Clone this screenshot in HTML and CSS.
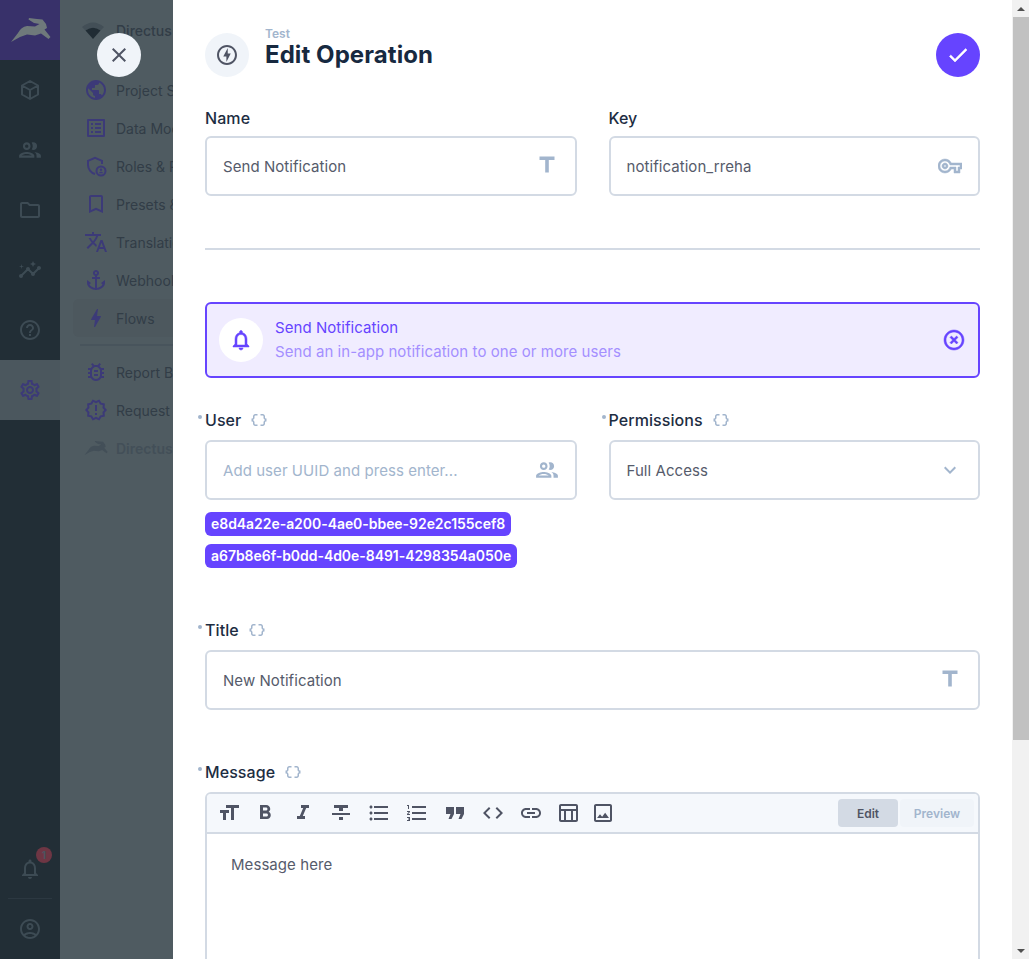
FILE: index.html
```html
<!DOCTYPE html>
<html lang="en">
<head>
    <meta charset="UTF-8">
    <meta name="viewport" content="width=device-width, initial-scale=1.0">
    <title>Edit Operation</title>
    <link rel="stylesheet" href="styles.css">
</head>
<body>
    <svg class="sprite" aria-hidden="true">
        <symbol id="rabbit" viewBox="9 17 41 26"><path d="M10 42L17 33Q20 27 26 26L34 26.500L38.500 24L33 23L27.500 19.500L28 18L36 19L41.500 19.500L45 24L46 28L43.500 29.500L49.500 37L47.500 39L40 33.500L34 35.500L26 34.500L19 37Z"/></symbol>
        <symbol id="people" viewBox="1 1 22 22"><path d="M9 13.750c-2.340 0-7 1.170-7 3.500V19h14v-1.750c0-2.330-4.660-3.500-7-3.500zM4.340 17c.84-.58 2.870-1.250 4.660-1.250s3.820.67 4.660 1.250H4.340zM9 12c1.930 0 3.500-1.570 3.500-3.500S10.930 5 9 5 5.500 6.570 5.500 8.500 7.070 12 9 12zm0-5c.83 0 1.500.67 1.500 1.500S9.830 10 9 10s-1.500-.67-1.500-1.500S8.170 7 9 7zm7.040 6.810c1.160.84 1.960 1.960 1.960 3.440V19h4v-1.750c0-2.020-3.500-3.170-5.960-3.440zM15 12c1.930 0 3.500-1.570 3.500-3.500S16.930 5 15 5c-.54 0-1.040.13-1.500.35.63.89 1 1.980 1 3.150s-.37 2.260-1 3.150c.46.22.96.35 1.500.35z"/></symbol>
        <symbol id="braces" viewBox="0 0 24 24"><path d="M4 7v2c0 .55-.45 1-1 1H2v4h1c.55 0 1 .45 1 1v2c0 1.650 1.350 3 3 3h3v-2H7c-.55 0-1-.45-1-1v-2c0-1.300-.84-2.420-2-2.830v-.34C5.160 11.420 6 10.300 6 9V7c0-.55.45-1 1-1h3V4H7C5.350 4 4 5.350 4 7zm17 3c-.55 0-1-.45-1-1V7c0-1.650-1.350-3-3-3h-3v2h3c.55 0 1 .45 1 1v2c0 1.300.84 2.420 2 2.830v.34c-1.160.41-2 1.520-2 2.830v2c0 .55-.45 1-1 1h-3v2h3c1.650 0 3-1.350 3-3v-2c0-.55.45-1 1-1h1v-4h-1z"/></symbol>
        <symbol id="title-icon" viewBox="0 0 24 24"><path d="M4.500 2.500v3.500h5.700v12.500h3.600V6h5.700V2.500z"/></symbol>
    </svg>

    <div class="app">
        <!-- far left module bar -->
        <aside class="modules">
            <div class="logo"><svg class="logo-mark"><use href="#rabbit"/></svg></div>
            <div class="module"><svg class="icon" viewBox="0 0 24 24"><path class="cube" d="M12 3l8 4.500v9L12 21l-8-4.500v-9zM4 7.500l8 4.500 8-4.500M12 12v9"/></svg></div>
            <div class="module"><svg class="icon"><use href="#people"/></svg></div>
            <div class="module"><svg class="icon" viewBox="0 0 24 24"><path d="M9.170 6l2 2H20v10H4V6h5.170M10 4H4c-1.100 0-1.990.9-1.990 2L2 18c0 1.100.9 2 2 2h16c1.100 0 2-.9 2-2V8c0-1.100-.9-2-2-2h-8l-2-2z"/></svg></div>
            <div class="module"><svg class="icon" viewBox="0 0 24 24"><path d="M21 8c-1.450 0-2.260 1.440-1.930 2.510l-3.550 3.560c-.3-.09-.74-.09-1.040 0l-2.550-2.550C12.270 10.450 11.460 9 10 9c-1.450 0-2.270 1.440-1.930 2.520l-4.560 4.550C2.440 15.740 1 16.550 1 18c0 1.100.9 2 2 2 1.450 0 2.260-1.440 1.930-2.510l4.550-4.560c.3.09.74.09 1.040 0l2.550 2.550C12.730 16.550 13.540 18 15 18c1.450 0 2.270-1.440 1.930-2.520l3.560-3.550c1.070.33 2.510-.48 2.510-1.930 0-1.100-.9-2-2-2z"/><path d="M15 9l.94-2.070L18 6l-2.060-.93L15 3l-.92 2.070L12 6l2.080.93zM3.500 11L4 9l2-.5L4 8l-.5-2L3 8l-2 .5L3 9z"/></svg></div>
            <div class="module"><svg class="icon" viewBox="0 0 24 24"><path d="M11 18h2v-2h-2v2zm1-16C6.480 2 2 6.480 2 12s4.480 10 10 10 10-4.480 10-10S17.520 2 12 2zm0 18c-4.410 0-8-3.590-8-8s3.590-8 8-8 8 3.590 8 8-3.590 8-8 8zm0-14c-2.210 0-4 1.790-4 4h2c0-1.100.9-2 2-2s2 .9 2 2c0 2-3 1.750-3 5h2c0-2.250 3-2.500 3-5 0-2.210-1.790-4-4-4z"/></svg></div>
            <div class="module active"><svg class="icon" viewBox="0 0 24 24"><path d="M19.430 12.980c.04-.32.07-.64.07-.98 0-.34-.03-.66-.07-.98l2.110-1.650c.19-.15.24-.42.12-.64l-2-3.460c-.09-.16-.26-.25-.44-.25-.06 0-.12.01-.17.03l-2.490 1c-.52-.4-1.080-.73-1.690-.98l-.38-2.650C14.460 2.180 14.250 2 14 2h-4c-.25 0-.46.18-.49.42l-.38 2.650c-.61.25-1.170.59-1.690.98l-2.490-1c-.06-.02-.12-.03-.18-.03-.17 0-.34.09-.43.25l-2 3.460c-.13.22-.07.49.12.64l2.110 1.650c-.04.32-.07.65-.07.98 0 .33.03.66.07.98l-2.110 1.650c-.19.15-.24.42-.12.64l2 3.460c.09.16.26.25.44.25.06 0 .12-.01.17-.03l2.490-1c.52.4 1.080.73 1.690.98l.38 2.650c.03.24.24.42.49.42h4c.25 0 .46-.18.49-.42l.38-2.650c.61-.25 1.170-.59 1.690-.98l2.490 1c.06.02.12.03.18.03.17 0 .34-.09.43-.25l2-3.460c.12-.22.07-.49-.12-.64l-2.110-1.650zm-1.980-1.710c.04.31.05.52.05.73 0 .21-.02.43-.05.73l-.14 1.130.89.7 1.080.84-.7 1.210-1.270-.51-1.040-.42-.9.68c-.43.32-.84.56-1.250.73l-1.060.43-.16 1.130-.2 1.350h-1.400l-.19-1.350-.16-1.130-1.060-.43c-.43-.18-.83-.41-1.230-.71l-.91-.7-1.060.43-1.270.51-.7-1.210 1.080-.84.89-.7-.14-1.130c-.03-.31-.05-.54-.05-.74s.02-.43.05-.73l.14-1.130-.89-.7-1.080-.84.7-1.210 1.270.51 1.040.42.9-.68c.43-.32.84-.56 1.250-.73l1.060-.43.16-1.130.2-1.350h1.390l.19 1.350.16 1.130 1.060.43c.43.18.83.41 1.230.71l.91.7 1.060-.43 1.270-.51.7 1.210-1.070.85-.89.7.14 1.130zM12 8c-2.210 0-4 1.790-4 4s1.790 4 4 4 4-1.790 4-4-1.790-4-4-4zm0 6c-1.100 0-2-.9-2-2s.9-2 2-2 2 .9 2 2-.9 2-2 2z"/></svg></div>
            <div class="module bottom-first">
                <svg class="icon" viewBox="0 0 24 24"><path d="M12 22c1.100 0 2-.9 2-2h-4c0 1.100.9 2 2 2zm6-6v-5c0-3.070-1.630-5.640-4.500-6.320V4c0-.83-.67-1.500-1.500-1.500s-1.500.67-1.500 1.500v.68C7.640 5.360 6 7.920 6 11v5l-2 2v1h16v-1l-2-2zm-2 1H8v-6c0-2.480 1.510-4.500 4-4.500s4 2.020 4 4.500v6z"/></svg>
                <span class="badge">1</span>
            </div>
            <div class="module-line"></div>
            <div class="module"><svg class="icon" viewBox="0 0 24 24"><path d="M12 2C6.480 2 2 6.480 2 12s4.480 10 10 10 10-4.480 10-10S17.520 2 12 2zM7.350 18.500C8.660 17.560 10.260 17 12 17s3.340.56 4.650 1.500c-1.310.94-2.910 1.500-4.650 1.500s-3.340-.56-4.650-1.500zm10.790-1.380C16.450 15.800 14.320 15 12 15s-4.450.8-6.140 2.120C4.700 15.730 4 13.950 4 12c0-4.420 3.580-8 8-8s8 3.580 8 8c0 1.950-.7 3.730-1.860 5.120zM12 6c-1.930 0-3.500 1.570-3.500 3.500S10.070 13 12 13s3.500-1.570 3.500-3.500S13.930 6 12 6zm0 5c-.83 0-1.500-.67-1.500-1.500S11.170 8 12 8s1.500.67 1.500 1.500S12.830 11 12 11z"/></svg></div>
        </aside>

        <!-- settings nav, dimmed behind the drawer -->
        <nav class="nav">
            <div class="nav-head">
                <svg class="signal" viewBox="0 0 24 18"><path class="signal-top" d="M1 6Q12 -3 23 6L19.500 9.500Q12 4 4.500 9.500Z"/><path d="M4.500 9.500Q12 4 19.500 9.500L12 18Z"/></svg>
                <span>Directus</span>
            </div>
            <ul class="nav-list">
                <li class="nav-item"><svg class="icon" viewBox="0 0 24 24"><path d="M12 2C6.480 2 2 6.480 2 12s4.480 10 10 10 10-4.480 10-10S17.520 2 12 2zm-1 17.930c-3.950-.49-7-3.850-7-7.930 0-.62.08-1.210.21-1.790L9 15v1c0 1.100.9 2 2 2v1.930zm6.900-2.540c-.26-.81-1-1.390-1.900-1.390h-1v-3c0-.55-.45-1-1-1H8v-2h2c.55 0 1-.45 1-1V7h2c1.100 0 2-.9 2-2v-.41c2.930 1.190 5 4.060 5 7.410 0 2.080-.8 3.970-2.100 5.390z"/></svg><span>Project Settings</span></li>
                <li class="nav-item"><svg class="icon" viewBox="0 0 24 24"><path d="M19 5v14H5V5h14m1.100-2H3.900c-.5 0-.9.4-.9.9v16.200c0 .4.4.9.9.9h16.200c.4 0 .9-.5.9-.9V3.900c0-.5-.5-.9-.9-.9zM11 7h6v2h-6V7zm0 4h6v2h-6v-2zm0 4h6v2h-6zM7 7h2v2H7zm0 4h2v2H7zm0 4h2v2H7z"/></svg><span>Data Model</span></li>
                <li class="nav-item"><svg class="icon" viewBox="0 0 24 24"><path class="shield" d="M11 20C7 18.800 4 15 4 11V6.800L11 3.800L18 6.800V10"/><circle class="shield" cx="17" cy="17" r="4.500"/><circle cx="17" cy="15.700" r="1.200"/><path d="M14.800 19.300c.4-1 1.300-1.500 2.200-1.500s1.800.5 2.200 1.500z"/></svg><span>Roles &amp; Permissions</span></li>
                <li class="nav-item"><svg class="icon" viewBox="0 0 24 24"><path d="M17 3H7c-1.100 0-1.990.9-1.990 2L5 21l7-3 7 3V5c0-1.100-.9-2-2-2zm0 15l-5-2.180L7 18V5h10v13z"/></svg><span>Presets &amp; Bookmarks</span></li>
                <li class="nav-item"><svg class="icon" viewBox="0 0 24 24"><path d="M12.870 15.070l-2.540-2.510.03-.03c1.740-1.940 2.980-4.170 3.710-6.530H17V4h-7V2H8v2H1v1.990h11.170C11.500 7.920 10.440 9.750 9 11.350 8.070 10.320 7.300 9.190 6.690 8h-2c.73 1.630 1.730 3.170 2.980 4.560l-5.090 5.020L4 19l5-5 3.110 3.110.76-2.040zM18.500 10h-2L12 22h2l1.120-3h4.750L21 22h2l-4.500-12zm-2.620 7l1.620-4.330L19.120 17h-3.240z"/></svg><span>Translation Strings</span></li>
                <li class="nav-item"><svg class="icon" viewBox="0 0 24 24"><path d="M17 15l1.550 1.550c-.96 1.690-3.330 3.040-5.550 3.370V11h3V9h-3V7.820C14.160 7.400 15 6.300 15 5c0-1.650-1.350-3-3-3S9 3.350 9 5c0 1.300.84 2.400 2 2.820V9H8v2h3v8.920c-2.220-.33-4.590-1.680-5.550-3.370L7 15l-4-3v3c0 3.880 4.920 7 9 7s9-3.120 9-7v-3l-4 3zM12 4c.55 0 1 .45 1 1s-.45 1-1 1-1-.45-1-1 .45-1 1-1z"/></svg><span>Webhooks</span></li>
                <li class="nav-item current"><svg class="icon" viewBox="0 0 24 24"><path d="M11 21h-1l1-7H7.500c-.88 0-.33-.75-.31-.78C8.480 10.940 10.420 7.540 13.010 3h1l-1 7h3.510c.4 0 .62.19.4.66C12.970 17.550 11 21 11 21z"/></svg><span>Flows</span></li>
                <li class="nav-line"></li>
                <li class="nav-item"><svg class="icon" viewBox="0 0 24 24"><path d="M20 8h-2.810c-.45-.78-1.070-1.450-1.820-1.960L17 4.410 15.590 3l-2.170 2.170C12.960 5.060 12.490 5 12 5s-.96.06-1.410.17L8.410 3 7 4.410l1.620 1.630C7.880 6.550 7.260 7.220 6.810 8H4v2h2.090c-.05.33-.09.66-.09 1v1H4v2h2v1c0 .34.04.67.09 1H4v2h2.810c1.040 1.790 2.970 3 5.190 3s4.150-1.210 5.190-3H20v-2h-2.090c.05-.33.09-.66.09-1v-1h2v-2h-2v-1c0-.34-.04-.67-.09-1H20V8zm-4 4v3c0 .22-.03.47-.07.7l-.1.65-.37.65c-.72 1.240-2.040 2-3.460 2s-2.740-.77-3.460-2l-.37-.64-.1-.65C8.030 15.480 8 15.230 8 15v-4c0-.23.03-.48.07-.7l.1-.65.37-.65c.3-.52.72-.97 1.210-1.310l.57-.39.74-.18c.31-.08.63-.12.94-.12.32 0 .63.04.95.12l.68.16.61.42c.5.34.91.78 1.210 1.310l.38.65.1.65c.04.22.07.47.07.69v1zm-6 2h4v2h-4zm0-4h4v2h-4z"/></svg><span>Report Bug</span></li>
                <li class="nav-item"><svg class="icon" viewBox="0 0 24 24"><path d="M23 12l-2.440-2.780.34-3.680-3.610-.82-1.890-3.180L12 3 8.600 1.540 6.710 4.720l-3.610.81.34 3.680L1 12l2.440 2.780-.34 3.690 3.610.82 1.890 3.180L12 21l3.400 1.460 1.890-3.180 3.610-.82-.34-3.680L23 12zm-4.510 2.110l.26 2.790-2.740.62-1.430 2.410L12 18.820l-2.580 1.110-1.430-2.410-2.740-.62.26-2.800L3.660 12l1.850-2.120-.26-2.780 2.740-.61 1.430-2.410L12 5.180l2.580-1.110 1.430 2.410 2.740.62-.26 2.790L20.340 12l-1.850 2.110zM11 15h2v2h-2zm0-8h2v6h-2z"/></svg><span>Request Feature</span></li>
                <li class="nav-item version"><svg class="icon"><use href="#rabbit"/></svg><span>Directus 9</span></li>
            </ul>
        </nav>

        <main class="drawer">
            <header class="drawer-head">
                <div class="head-icon"><svg class="icon" viewBox="0 0 24 24"><path d="M12 2.020c-5.510 0-9.980 4.470-9.980 9.980s4.470 9.980 9.980 9.980 9.980-4.470 9.980-9.980S17.510 2.020 12 2.020zm0 17.960c-4.400 0-7.980-3.580-7.980-7.980S7.600 4.020 12 4.020 19.980 7.600 19.980 12 16.400 19.980 12 19.980zM12.750 5l-4.500 8.500h3.140V19l4.360-8.500h-3z"/></svg></div>
                <div class="head-text">
                    <div class="head-sub">Test</div>
                    <h1>Edit Operation</h1>
                </div>
                <button class="save"><svg class="icon heavy" viewBox="0 0 24 24"><path d="M9 16.170L4.830 12l-1.420 1.410L9 19 21 7l-1.410-1.410z"/></svg></button>
            </header>

            <div class="form">
                <div class="two-col">
                    <div class="field">
                        <div class="label">Name</div>
                        <div class="input"><span>Send Notification</span><svg class="icon"><use href="#title-icon"/></svg></div>
                    </div>
                    <div class="field">
                        <div class="label">Key</div>
                        <div class="input"><span>notification_rreha</span><svg class="icon heavy" viewBox="0 0 24 24"><path d="M22 19h-6v-4h-2.680c-1.140 2.420-3.600 4-6.320 4-3.860 0-7-3.140-7-7s3.140-7 7-7c2.720 0 5.170 1.580 6.320 4H24v6h-2v4zm-4-2h2v-4h2v-2H11.940l-.23-.67C11.010 8.340 9.110 7 7 7c-2.760 0-5 2.240-5 5s2.240 5 5 5c2.110 0 4.010-1.340 4.710-3.330l.23-.67H18v4zM7 15c-1.650 0-3-1.350-3-3s1.350-3 3-3 3 1.350 3 3-1.350 3-3 3zm0-4c-.55 0-1 .45-1 1s.45 1 1 1 1-.45 1-1-.45-1-1-1z"/></svg></div>
                    </div>
                </div>

                <hr class="divider">

                <div class="type-group">
                    <div class="notice">
                        <div class="notice-icon"><svg class="icon heavy" viewBox="0 0 24 24"><path d="M12 22c1.100 0 2-.9 2-2h-4c0 1.100.9 2 2 2zm6-6v-5c0-3.070-1.630-5.640-4.500-6.320V4c0-.83-.67-1.500-1.500-1.500s-1.500.67-1.500 1.500v.68C7.640 5.360 6 7.920 6 11v5l-2 2v1h16v-1l-2-2zm-2 1H8v-6c0-2.480 1.510-4.500 4-4.500s4 2.020 4 4.500v6z"/></svg></div>
                        <div class="notice-text">
                            <div class="notice-title">Send Notification</div>
                            <div class="notice-sub">Send an in-app notification to one or more users</div>
                        </div>
                        <svg class="icon heavy" viewBox="0 0 24 24"><path d="M14.590 8L12 10.590 9.410 8 8 9.410 10.590 12 8 14.590 9.410 16 12 13.410 14.590 16 16 14.590 13.410 12 16 9.410 14.590 8zM12 2C6.470 2 2 6.470 2 12s4.470 10 10 10 10-4.470 10-10S17.530 2 12 2zm0 18c-4.410 0-8-3.590-8-8s3.590-8 8-8 8 3.590 8 8-3.590 8-8 8z"/></svg>
                    </div>

                    <div class="two-col">
                        <div class="field raw">
                            <div class="label">User <svg class="braces"><use href="#braces"/></svg></div>
                            <div class="input placeholder"><span>Add user UUID and press enter...</span><svg class="icon"><use href="#people"/></svg></div>
                            <div class="tags">
                                <span class="tag">e8d4a22e-a200-4ae0-bbee-92e2c155cef8</span>
                                <span class="tag">a67b8e6f-b0dd-4d0e-8491-4298354a050e</span>
                            </div>
                        </div>
                        <div class="field raw">
                            <div class="label">Permissions <svg class="braces"><use href="#braces"/></svg></div>
                            <div class="input"><span>Full Access</span><svg class="icon" viewBox="0 0 24 24"><path d="M16.590 8.590L12 13.170 7.410 8.590 6 10l6 6 6-6z"/></svg></div>
                        </div>
                    </div>
                </div>

                <div class="field raw">
                    <div class="label">Title <svg class="braces"><use href="#braces"/></svg></div>
                    <div class="input"><span>New Notification</span><svg class="icon"><use href="#title-icon"/></svg></div>
                </div>

                <div class="field raw">
                    <div class="label">Message <svg class="braces"><use href="#braces"/></svg></div>
                    <div class="editor">
                        <div class="toolbar">
                            <svg class="icon" viewBox="0 0 24 24"><path d="M9 4v3h5v12h3V7h5V4H9zm-6 8h3v7h3v-7h3V9H3v3z"/></svg>
                            <svg class="icon tool-bold" viewBox="0 0 24 24"><path d="M15.600 10.790c.97-.67 1.650-1.770 1.650-2.790 0-2.260-1.750-4-4-4H7v14h7.040c2.090 0 3.710-1.700 3.710-3.790 0-1.520-.86-2.820-2.150-3.420zM10 6.500h3c.83 0 1.500.67 1.500 1.500s-.67 1.500-1.500 1.500h-3v-3zm3.500 9H10v-3h3.500c.83 0 1.500.67 1.500 1.500s-.67 1.500-1.500 1.500z"/></svg>
                            <svg class="icon" viewBox="0 0 24 24"><path d="M10 4v3h2.210l-3.420 8H6v3h8v-3h-2.210l3.420-8H18V4z"/></svg>
                            <svg class="icon" viewBox="0 0 24 24"><path d="M10 19h4v-3h-4v3zM5 4v3h5v3h4V7h5V4H5zM3 14h18v-2H3v2z"/></svg>
                            <svg class="icon" viewBox="0 0 24 24"><path d="M4 10.500c-.83 0-1.500.67-1.500 1.500s.67 1.500 1.500 1.500 1.500-.67 1.500-1.500-.67-1.500-1.500-1.500zm0-6c-.83 0-1.500.67-1.500 1.500S3.170 7.500 4 7.500 5.500 6.830 5.500 6 4.830 4.500 4 4.500zm0 12c-.83 0-1.500.68-1.500 1.500s.68 1.500 1.500 1.500 1.500-.68 1.500-1.500-.67-1.500-1.500-1.500zM7 19h14v-2H7v2zm0-6h14v-2H7v2zm0-8v2h14V5H7z"/></svg>
                            <svg class="icon" viewBox="0 0 24 24"><path d="M2 17h2v.5H3v1h1v.5H2v1h3v-4H2v1zm1-9h1V4H2v1h1v3zm-1 3h1.800L2 13.100v.9h3v-1H3.200L5 10.900V10H2v1zm5-6v2h14V5H7zm0 14h14v-2H7v2zm0-6h14v-2H7v2z"/></svg>
                            <svg class="icon" viewBox="0 0 24 24"><path d="M3 6h8v7l-2.500 5h-3l2-5H3zM13 6h8v7l-2.500 5h-3l2-5h-4.500z"/></svg>
                            <svg class="icon" viewBox="0 0 24 24"><path d="M9.400 16.600L4.800 12l4.600-4.600L8 6l-6 6 6 6 1.400-1.400zm5.200 0l4.600-4.600-4.600-4.600L16 6l6 6-6 6-1.400-1.400z"/></svg>
                            <svg class="icon" viewBox="0 0 24 24"><path d="M3.900 12c0-1.710 1.390-3.100 3.100-3.100h4V7H7c-2.760 0-5 2.240-5 5s2.240 5 5 5h4v-1.900H7c-1.710 0-3.100-1.390-3.100-3.100zM8 13h8v-2H8v2zm9-6h-4v1.900h4c1.710 0 3.100 1.390 3.100 3.100s-1.390 3.100-3.100 3.100h-4V17h4c2.760 0 5-2.240 5-5s-2.240-5-5-5z"/></svg>
                            <svg class="icon tool-table" viewBox="0 0 24 24"><path d="M20 3H5c-1.100 0-2 .9-2 2v14c0 1.100.9 2 2 2h15c1.100 0 2-.9 2-2V5c0-1.100-.9-2-2-2zm0 2v3H5V5h15zm-5 14h-5v-9h5v9zM5 10h3v9H5v-9zm12 9v-9h3v9h-3z"/></svg>
                            <svg class="icon tool-image" viewBox="0 0 24 24"><path d="M19 5v14H5V5h14m0-2H5c-1.100 0-2 .9-2 2v14c0 1.100.9 2 2 2h14c1.100 0 2-.9 2-2V5c0-1.100-.9-2-2-2zm-4.860 8.860l-3 3.870L9 13.140 6 17h12l-3.860-5.140z"/></svg>
                            <div class="view-tabs">
                                <span class="view-tab on">Edit</span>
                                <span class="view-tab">Preview</span>
                            </div>
                        </div>
                        <div class="editor-body">Message here</div>
                    </div>
                </div>
            </div>
        </main>

        <div class="scrollbar">
            <div class="sb-btn"><span class="arrow-up"></span></div>
            <div class="sb-thumb"></div>
            <div class="sb-btn"><span class="arrow-down"></span></div>
        </div>

        <!-- overlay button that hangs off the drawer -->
        <button class="close"><svg class="icon" viewBox="0 0 24 24"><path d="M19 6.410L17.590 5 12 10.590 6.410 5 5 6.410 10.590 12 5 17.590 6.410 19 12 13.410 17.590 19 19 17.590 13.410 12z"/></svg></button>
    </div>
</body>
</html>
```

FILE: styles.css
```css
* {
    box-sizing: border-box;
}

html, body {
    height: 100%;
    margin: 0;
    overflow: hidden;
}

body {
    font-family: 'Inter', 'Liberation Sans', sans-serif;
    font-size: 14px;
    color: #565b6b;
    background: white;
}

.sprite {
    display: none;
}

.icon {
    width: 24px;
    height: 24px;
    flex-shrink: 0;
    fill: currentColor;
    display: block;
}

.icon.heavy {
    stroke: currentColor;
    stroke-width: 0.5;
}

.app {
    position: relative;
    display: flex;
    height: 100vh;
}

/* module bar */
.modules {
    width: 60px;
    flex-shrink: 0;
    display: flex;
    flex-direction: column;
    background: #222e36;
    color: #3d4b54;
}

.logo {
    height: 60px;
    display: flex;
    align-items: center;
    justify-content: center;
    background: #38316a;
}

.logo-mark {
    width: 41px;
    height: 26px;
    fill: #6f797b;
}

.module {
    position: relative;
    height: 60px;
    display: flex;
    align-items: center;
    justify-content: center;
}

.module.active {
    background: #4b575e;
    color: #3c3a78;
}

.module.bottom-first {
    margin-top: auto;
}

.cube {
    fill: none;
    stroke: currentColor;
    stroke-width: 2;
    stroke-linejoin: round;
}

.badge {
    position: absolute;
    top: 8px;
    left: 36px;
    width: 16px;
    height: 16px;
    border-radius: 50%;
    background: #6e3644;
    color: #4a5560;
    font-size: 10px;
    font-weight: 700;
    line-height: 16px;
    text-align: center;
}

.module-line {
    height: 1px;
    margin: 0 8px -1px;
    position: relative;
    top: -1px;
    background: #2c3841;
}

/* settings nav */
.nav {
    width: 113px;
    flex-shrink: 0;
    overflow: hidden;
    background: #4f5b61;
    color: #323d47;
    white-space: nowrap;
}

.nav-head {
    height: 60px;
    display: flex;
    align-items: center;
    gap: 11px;
    padding-left: 21px;
    font-size: 14px;
    font-weight: 500;
}

.signal {
    width: 24px;
    height: 18px;
    flex-shrink: 0;
    fill: #202c34;
}

.signal-top {
    fill: #434f57;
}

.nav-list {
    list-style: none;
    margin: 0;
    padding: 11px 0 0 13px;
    width: 240px;
}

.nav-item {
    height: 38px;
    display: flex;
    align-items: center;
    gap: 8px;
    padding-left: 11px;
    border-radius: 6px;
}

.nav-item .icon {
    color: #3c3a78;
}

.nav-item.current {
    background: #4d585e;
}

.nav-item.version {
    color: #434f58;
    font-weight: 600;
}

.nav-item.version .icon {
    color: #434f58;
}

.shield {
    fill: none;
    stroke: currentColor;
    stroke-width: 2;
}

.nav-line {
    height: 2px;
    margin: 7px 0 7px 7px;
    background: #48545c;
}

/* drawer */
.drawer {
    flex: 1;
    min-width: 0;
    overflow: hidden;
    padding: 33px 32px 0;
    background: white;
}

.drawer-head {
    display: flex;
    align-items: center;
    height: 44px;
    margin-bottom: 31px;
}

.head-icon {
    width: 44px;
    height: 44px;
    border-radius: 50%;
    background: #f0f4f9;
    color: #4f5464;
    display: flex;
    align-items: center;
    justify-content: center;
    margin-right: 16px;
}

.head-text {
    flex: 1;
}

.head-sub {
    height: 14px;
    margin-top: -14px;
    font-size: 12px;
    line-height: 14px;
    font-weight: 600;
    color: #a2b5cd;
}

h1 {
    margin: 0;
    font-size: 24px;
    line-height: 28px;
    font-weight: 700;
    letter-spacing: 0.08px;
    color: #172940;
}

.save {
    width: 44px;
    height: 44px;
    padding: 0;
    border: none;
    border-radius: 50%;
    background: #6644ff;
    color: white;
    display: flex;
    align-items: center;
    justify-content: center;
}

.form {
    display: flex;
    flex-direction: column;
    gap: 52px;
}

.two-col {
    display: grid;
    grid-template-columns: 1fr 1fr;
    column-gap: 32px;
}

.type-group {
    display: flex;
    flex-direction: column;
    gap: 32px;
}

.label {
    display: flex;
    align-items: center;
    height: 20px;
    margin-bottom: 8px;
    font-size: 16px;
    font-weight: 500;
    letter-spacing: 0.08px;
    color: #1d2d42;
}

.raw .label {
    position: relative;
    margin-bottom: 10px;
}

/* required dot */
.raw .label::before {
    content: "";
    position: absolute;
    left: -7px;
    top: 5px;
    width: 4px;
    height: 4px;
    border-radius: 50%;
    background: #a2b5cd;
}

.braces {
    width: 18px;
    height: 18px;
    margin-left: 9px;
    fill: #a2b5cd;
}

.input {
    height: 60px;
    display: flex;
    align-items: center;
    justify-content: space-between;
    padding: 0 16px;
    border: 2px solid #d3dae4;
    border-radius: 6px;
    background: white;
    font-size: 15px;
    letter-spacing: 0.06px;
}

.input .icon {
    color: #a2b5cd;
}

.input.placeholder span {
    color: #a2b5cd;
}

.divider {
    height: 2px;
    margin: 0;
    border: none;
    background: #d3dae4;
}

.notice {
    height: 76px;
    display: flex;
    align-items: center;
    padding: 0 12px;
    border: 2px solid #6644ff;
    border-radius: 6px;
    background: #f0ecff;
    color: #6644ff;
    font-size: 15px;
    letter-spacing: 0.06px;
}

.notice-icon {
    width: 44px;
    height: 44px;
    border-radius: 50%;
    background: white;
    display: flex;
    align-items: center;
    justify-content: center;
    margin-right: 12px;
}

.notice-text {
    flex: 1;
    line-height: 24px;
}

.notice-sub {
    color: #a48fff;
}

.tags {
    display: flex;
    flex-direction: column;
    align-items: flex-start;
    gap: 8px;
    margin-top: 12px;
}

.tag {
    height: 24px;
    padding: 0 6px;
    border-radius: 6px;
    background: #6644ff;
    color: white;
    font-size: 14px;
    font-weight: 600;
    letter-spacing: -0.05px;
    line-height: 24px;
}

.editor {
    height: 400px;
    border: 2px solid #d3dae4;
    border-radius: 6px;
    overflow: hidden;
}

.toolbar {
    height: 40px;
    display: flex;
    align-items: flex-start;
    gap: 14px;
    padding: 7px 4px 0 10px;
    border-bottom: 2px solid #d3dae4;
    background: #f5f8fc;
    color: #4f5464;
}

.tool-bold {
    margin-left: -2px;
}

.tool-table {
    margin-left: -1px;
}

.tool-image {
    margin-left: -3px;
}

.view-tabs {
    margin-left: auto;
    margin-top: -2px;
    display: flex;
    gap: 2px;
}

.view-tab {
    height: 28px;
    width: 74px;
    border-radius: 4px;
    background: #f0f4f9;
    color: #a2b5cd;
    font-size: 12px;
    font-weight: 600;
    line-height: 30px;
    text-align: center;
}

.view-tab.on {
    width: 60px;
    background: #d3dae4;
    color: #4f5464;
}

.editor-body {
    padding: 21px 24px;
    font-size: 15px;
    letter-spacing: 0.06px;
    line-height: 20px;
}

/* page scrollbar */
.scrollbar {
    width: 17px;
    flex-shrink: 0;
    display: flex;
    flex-direction: column;
    background: #f1f1f1;
}

.sb-btn {
    height: 17px;
    display: flex;
    align-items: center;
    justify-content: center;
}

.sb-thumb {
    height: 723px;
    margin: 0 0 auto 1px;
    background: #c1c1c1;
}

.arrow-up, .arrow-down {
    width: 0;
    height: 0;
    border-left: 4px solid transparent;
    border-right: 4px solid transparent;
}

.arrow-up {
    border-bottom: 4px solid #505050;
}

.arrow-down {
    border-top: 4px solid #505050;
}

.close {
    position: absolute;
    left: 97px;
    top: 33px;
    width: 44px;
    height: 44px;
    padding: 0;
    border: none;
    border-radius: 50%;
    background: #f0f4f9;
    color: #4f5464;
    display: flex;
    align-items: center;
    justify-content: center;
}
```
